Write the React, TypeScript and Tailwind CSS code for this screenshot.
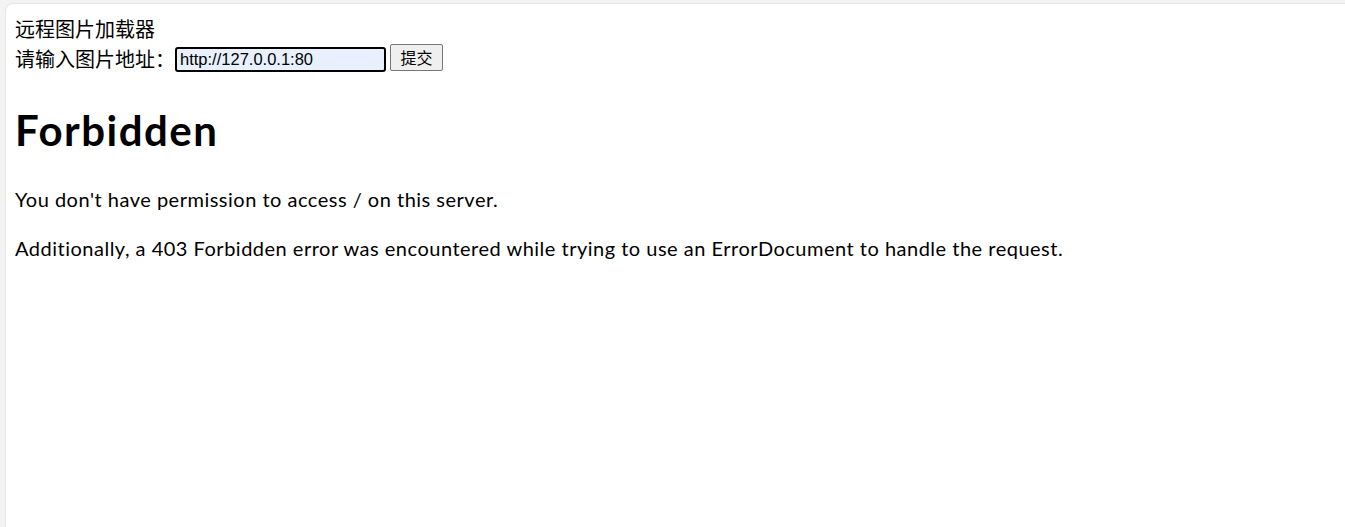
import React from "react";

export default function App() {
  return (
    <div className="w-[1345px] h-[527px] bg-[#f3f3f3] pt-[3px] pl-[5px] overflow-hidden">
      <div className="w-full h-full bg-white rounded-tl-[8px] border-l border-t border-[#e6e6e6] px-[9px] pt-[10px] text-black">
        <div className="text-[20px] leading-[29px] font-['Microsoft_YaHei','Noto_Sans_CJK_SC',sans-serif]">
          远程图片加载器
        </div>
        <div className="flex items-center h-[30px] text-[20px] leading-[29px] font-['Microsoft_YaHei','Noto_Sans_CJK_SC',sans-serif]">
          <span className="w-[160px]">请输入图片地址：</span>
          <div className="w-[211px] h-[25px] mt-[2px] border-2 border-black rounded-[3px] bg-[#e8f0fe] flex items-center pl-[3px] text-[16.5px] font-['Liberation_Sans',Arial,sans-serif] leading-none">
            http://127.0.0.1:80
          </div>
          <button className="ml-[4px] -mt-[2px] w-[53px] h-[27px] bg-[#efefef] border border-[#767676] rounded-[2px] text-[16px] leading-none font-['Microsoft_YaHei','Noto_Sans_CJK_SC',sans-serif] flex items-center justify-center">
            提交
          </button>
        </div>
        <div className="font-['Lato','Open_Sans',sans-serif]">
          <h1 className="mt-[33px] text-[42px] tracking-[1.5px] font-bold leading-[48px]">Forbidden</h1>
          <p className="mt-[31px] text-[20px] tracking-[0.5px] leading-[28px]">You don't have permission to access / on this server.</p>
          <p className="mt-[21px] text-[20px] tracking-[0.5px] leading-[28px]">Additionally, a 403 Forbidden error was encountered while trying to use an ErrorDocument to handle the request.</p>
        </div>
      </div>
    </div>
  );
}
